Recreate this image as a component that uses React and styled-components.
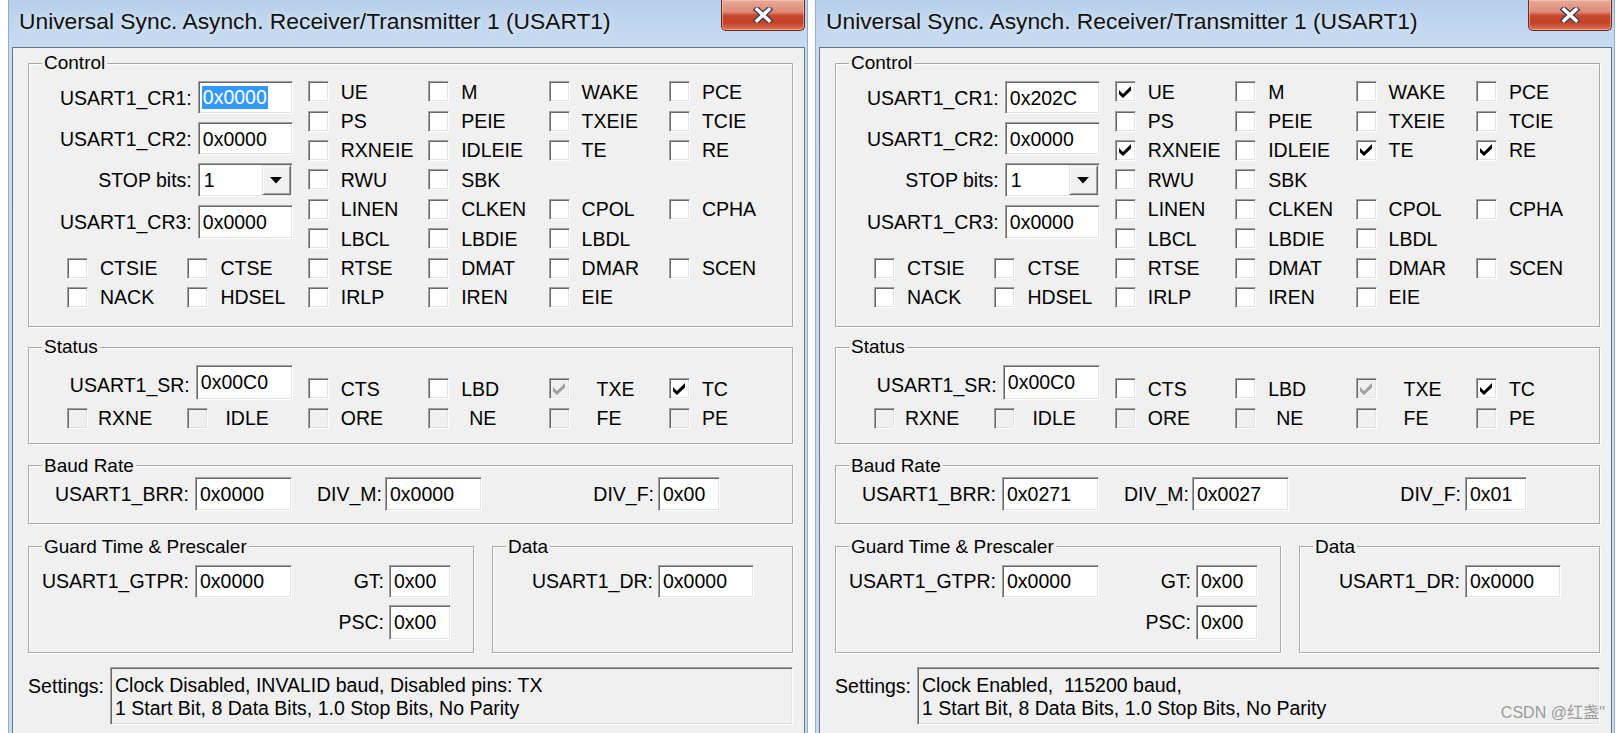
import React from 'react';
import styled, { createGlobalStyle } from 'styled-components';

const Global = createGlobalStyle`
  html, body { margin: 0; padding: 0; background: #ffffff; }
  body { font-family: "Liberation Sans", Arial, sans-serif; color: #000; }
`;

const Page = styled.div`
  position: relative;
  display: flex;
  gap: 7px;
  padding-left: 8px;
  height: 733px;
  overflow: hidden;
`;

const Window = styled.div`
  width: 800px;
  height: 733px;
  box-sizing: border-box;
  display: flex;
  flex-direction: column;
  position: relative;
  background: linear-gradient(180deg, #b6cfeb 0px, #c3d8ef 30px, #c8dcf1 60px, #c6daf0 100%);
  border-left: 1px solid #93acc8;
  border-right: 1px solid #93acc8;
  padding: 0 2px 0 3px;
`;

const TitleBar = styled.div`
  height: 47px;
  flex: none;
  display: flex;
  align-items: flex-start;
`;

const Title = styled.div`
  margin: 8px 0 0 7px;
  font-size: 22.8px;
  line-height: 26px;
  color: #111;
  white-space: nowrap;
  text-shadow: 0 0 6px rgba(255, 255, 255, 0.7);
`;

const CloseButton = styled.div`
  margin-left: auto;
  width: 84px;
  height: 31px;
  box-sizing: border-box;
  border: 1px solid #6f2a1c;
  border-top: none;
  border-radius: 0 0 5px 5px;
  background: linear-gradient(180deg, #e9a998 0%, #dc8a76 40%, #c8472e 52%, #c34227 75%, #dc7254 100%);
  box-shadow: inset 0 0 0 1px rgba(255, 220, 210, 0.45);
  display: flex;
  align-items: center;
  justify-content: center;
`;

const Client = styled.div`
  flex: 1;
  background: #f0f0f0;
  border: 1px solid #62778e;
  border-bottom: none;
  padding: 4px 11px 0 15px;
  display: flex;
  flex-direction: column;
  min-height: 0;
`;

const Group = styled.fieldset`
  margin: ${p => p.$mt || 0}px 0 0 0;
  padding: 0 0 ${p => p.$pb || 0}px 0;
  border: 1px solid #a9a9a9;
  box-shadow: inset 1px 1px 0 #ffffff, 1px 1px 0 #ffffff;
  min-width: 0;
  flex: ${p => (p.$grow ? 1 : 'none')};
  width: ${p => (p.$w ? `${p.$w}px` : 'auto')};
  box-sizing: border-box;
`;

const Legend = styled.legend`
  margin-left: 13px;
  padding: 0 2px;
  font-size: 19px;
  line-height: 22px;
  background: #f0f0f0;
`;

const BitGrid = styled.div`
  margin: ${p => p.$mt}px 0 0 38px;
  display: grid;
  grid-template-columns: repeat(6, 120.4px);
  grid-auto-rows: 29.4px;
`;

const EditBlock = styled.div`
  grid-column: 1 / 3;
  grid-row: 1 / 7;
  margin-left: -20px;
  padding: 4px 15px 0 0;
  display: grid;
  grid-template-columns: minmax(0, 1fr) 95px;
  grid-auto-rows: min-content;
  column-gap: 6px;
  row-gap: 8px;
  align-items: center;
  align-content: start;
`;

const StatusField = styled.div`
  grid-column: 1 / 3;
  grid-row: 1;
  align-self: end;
  margin: 0 0 4px -20px;
  padding-right: 15px;
  display: grid;
  grid-template-columns: minmax(0, 1fr) 97px;
  column-gap: 6px;
  align-items: center;
`;

const FieldLabel = styled.div`
  font-size: 19.5px;
  line-height: 22px;
  text-align: right;
  white-space: nowrap;
  padding-right: ${p => p.$pr || 0}px;
  padding-top: ${p => p.$pt || 0}px;
  grid-column: ${p => p.$c || 'auto'};
  grid-row: ${p => p.$r || 'auto'};
`;

const Edit = styled.div`
  box-sizing: border-box;
  width: ${p => p.$w}px;
  height: ${p => p.$h || 34}px;
  background: #fff;
  border: 1px solid;
  border-color: #a0a0a0 #ffffff #ffffff #a0a0a0;
  box-shadow: inset 1px 1px 0 #696969, inset -1px -1px 0 #e3e3e3;
  padding-left: 4px;
  display: flex;
  align-items: center;
  font-size: 19.5px;
  line-height: 22px;
  white-space: pre;
  grid-column: ${p => p.$c || 'auto'};
  grid-row: ${p => p.$r || 'auto'};
`;

const Selected = styled.span`
  background: #3399ff;
  color: #fff;
  line-height: 23px;
  padding: 0 1px;
  margin-left: -1px;
`;

const Combo = styled.div`
  box-sizing: border-box;
  width: 95px;
  height: 34px;
  background: #fff;
  border: 1px solid;
  border-color: #a0a0a0 #ffffff #ffffff #a0a0a0;
  box-shadow: inset 1px 1px 0 #696969, inset -1px -1px 0 #e3e3e3;
  padding: 1px;
  display: flex;
`;

const ComboText = styled.div`
  flex: 1;
  display: flex;
  align-items: center;
  padding-left: 4px;
  font-size: 19.5px;
`;

const ComboButton = styled.div`
  width: 29px;
  box-sizing: border-box;
  background: #f0f0f0;
  border: 1px solid;
  border-color: #e3e3e3 #696969 #696969 #e3e3e3;
  box-shadow: inset 1px 1px 0 #ffffff, inset -1px -1px 0 #a0a0a0;
  display: flex;
  align-items: center;
  justify-content: center;
`;

const CheckCell = styled.div`
  grid-column: ${p => p.$c};
  grid-row: ${p => p.$r};
  display: flex;
  align-items: center;
`;

const Box = styled.span`
  flex: none;
  width: 21px;
  height: 21px;
  box-sizing: border-box;
  background: ${p => (p.$disabled ? '#f0f0f0' : '#ffffff')};
  border: 1px solid;
  border-color: #a0a0a0 #ffffff #ffffff #a0a0a0;
  box-shadow: inset 1px 1px 0 #696969, inset -1px -1px 0 #e3e3e3;
  display: flex;
  align-items: center;
  justify-content: center;
`;

const CheckLabel = styled.span`
  margin-left: ${p => p.$gap}px;
  font-size: 19.5px;
  line-height: 22px;
  white-space: nowrap;
`;

const FieldGrid = styled.div`
  display: grid;
  grid-template-columns: ${p => p.$cols};
  grid-template-rows: ${p => p.$rows || 'auto'};
  row-gap: 7px;
  align-items: center;
  padding-top: ${p => p.$pt || 0}px;
`;

const BottomRow = styled.div`
  margin-top: 12px;
  display: flex;
  gap: 18px;
`;

const SettingsRow = styled.div`
  margin-top: 14px;
  display: grid;
  grid-template-columns: 82px 1fr;
  align-items: start;
`;

const SettingsBox = styled.div`
  box-sizing: border-box;
  height: 58px;
  background: #f0f0f0;
  border: 1px solid;
  border-color: #a0a0a0 #ffffff #ffffff #a0a0a0;
  box-shadow: inset 1px 1px 0 #696969, inset -1px -1px 0 #e3e3e3;
  padding: 6px 0 0 4px;
  font-size: 19.5px;
  line-height: 23px;
  white-space: pre;
`;

const Watermark = styled.div`
  position: absolute;
  right: 9px;
  top: 703px;
  font-family: "Liberation Sans", "Noto Sans CJK SC", sans-serif;
  font-size: 16px;
  line-height: 20px;
  color: #9a9a9a;
  white-space: nowrap;
`;

const CloseIcon = () => (
  <svg width="20" height="16" viewBox="0 0 20 16">
    <path d="M4 2.5 L16 13.5 M16 2.5 L4 13.5" stroke="#3a3f52" strokeWidth="6" strokeLinecap="square" fill="none" />
    <path d="M4 2.5 L16 13.5 M16 2.5 L4 13.5" stroke="#ffffff" strokeWidth="3.4" strokeLinecap="square" fill="none" />
  </svg>
);

const Tick = ({ gray }) => (
  <svg width="12" height="12" viewBox="0 0 7 7">
    <polygon points="0,2.4 2.3,4.6 7,0 7,2.6 2.3,7 0,4.8" fill={gray ? '#a0a0a0' : '#000'} />
  </svg>
);

const Arrow = () => (
  <svg width="12" height="7" viewBox="0 0 12 7">
    <polygon points="0,0 12,0 6,6.5" fill="#000" />
  </svg>
);

const Check = ({ label, c, r, checked, disabled, gap = 12 }) => (
  <CheckCell $c={c} $r={r}>
    <Box $disabled={disabled}>{checked && <Tick gray={disabled} />}</Box>
    <CheckLabel $gap={gap}>{label}</CheckLabel>
  </CheckCell>
);

const controlBits = [
  ['UE', 3, 1], ['M', 4, 1], ['WAKE', 5, 1], ['PCE', 6, 1],
  ['PS', 3, 2], ['PEIE', 4, 2], ['TXEIE', 5, 2], ['TCIE', 6, 2],
  ['RXNEIE', 3, 3], ['IDLEIE', 4, 3], ['TE', 5, 3], ['RE', 6, 3],
  ['RWU', 3, 4], ['SBK', 4, 4],
  ['LINEN', 3, 5], ['CLKEN', 4, 5], ['CPOL', 5, 5], ['CPHA', 6, 5],
  ['LBCL', 3, 6], ['LBDIE', 4, 6], ['LBDL', 5, 6],
  ['CTSIE', 1, 7], ['CTSE', 2, 7], ['RTSE', 3, 7], ['DMAT', 4, 7], ['DMAR', 5, 7], ['SCEN', 6, 7],
  ['NACK', 1, 8], ['HDSEL', 2, 8], ['IRLP', 3, 8], ['IREN', 4, 8], ['EIE', 5, 8],
];

const statusBits = [
  { l: 'CTS', c: 3, r: 1 },
  { l: 'LBD', c: 4, r: 1 },
  { l: 'TXE', c: 5, r: 1, dis: true, chk: true, gap: 27 },
  { l: 'TC', c: 6, r: 1, chk: true },
  { l: 'RXNE', c: 1, r: 2, dis: true, gap: 10 },
  { l: 'IDLE', c: 2, r: 2, dis: true, gap: 17 },
  { l: 'ORE', c: 3, r: 2, dis: true },
  { l: 'NE', c: 4, r: 2, dis: true, gap: 20 },
  { l: 'FE', c: 5, r: 2, dis: true, gap: 27 },
  { l: 'PE', c: 6, r: 2, dis: true },
];

const windows = [
  {
    cr1: '0x0000', cr1Selected: true, cr2: '0x0000', cr3: '0x0000', sr: '0x00C0',
    brr: '0x0000', divm: '0x0000', divf: '0x00', gtpr: '0x0000', gt: '0x00', psc: '0x00', dr: '0x0000',
    checked: [],
    settings: 'Clock Disabled, INVALID baud, Disabled pins: TX\n1 Start Bit, 8 Data Bits, 1.0 Stop Bits, No Parity',
  },
  {
    cr1: '0x202C', cr2: '0x0000', cr3: '0x0000', sr: '0x00C0',
    brr: '0x0271', divm: '0x0027', divf: '0x01', gtpr: '0x0000', gt: '0x00', psc: '0x00', dr: '0x0000',
    checked: ['UE', 'RXNEIE', 'TE', 'RE'],
    settings: 'Clock Enabled,  115200 baud,\n1 Start Bit, 8 Data Bits, 1.0 Stop Bits, No Parity',
    watermark: true,
  },
];

const UsartDialog = ({ d }) => (
  <Window>
    <TitleBar>
      <Title>Universal Sync. Asynch. Receiver/Transmitter 1 (USART1)</Title>
      <CloseButton><CloseIcon /></CloseButton>
    </TitleBar>
    <Client>
      <Group $pb={14}>
        <Legend>Control</Legend>
        <BitGrid $mt={3}>
          <EditBlock>
            <FieldLabel>USART1_CR1:</FieldLabel>
            <Edit $w={95} $h={33}>{d.cr1Selected ? <Selected>{d.cr1}</Selected> : d.cr1}</Edit>
            <FieldLabel>USART1_CR2:</FieldLabel>
            <Edit $w={95} $h={33}>{d.cr2}</Edit>
            <FieldLabel>STOP bits:</FieldLabel>
            <Combo>
              <ComboText>1</ComboText>
              <ComboButton><Arrow /></ComboButton>
            </Combo>
            <FieldLabel>USART1_CR3:</FieldLabel>
            <Edit $w={95} $h={34}>{d.cr3}</Edit>
          </EditBlock>
          {controlBits.map(([l, c, r]) => (
            <Check key={l} label={l} c={c} r={r} checked={d.checked.includes(l)} />
          ))}
        </BitGrid>
      </Group>

      <Group $mt={9} $pb={10}>
        <Legend>Status</Legend>
        <BitGrid $mt={16}>
          <StatusField>
            <FieldLabel $pt={6}>USART1_SR:</FieldLabel>
            <Edit $w={97} $h={35}>{d.sr}</Edit>
          </StatusField>
          {statusBits.map(b => (
            <Check key={b.l} label={b.l} c={b.c} r={b.r} checked={b.chk} disabled={b.dis} gap={b.gap} />
          ))}
        </BitGrid>
      </Group>

      <Group $mt={11} $pb={12}>
        <Legend>Baud Rate</Legend>
        <FieldGrid $cols="166px 97px 93px 97px 176px 62px">
          <FieldLabel $pr={6}>USART1_BRR:</FieldLabel>
          <Edit $w={97}>{d.brr}</Edit>
          <FieldLabel $pr={3}>DIV_M:</FieldLabel>
          <Edit $w={97}>{d.divm}</Edit>
          <FieldLabel $pr={4}>DIV_F:</FieldLabel>
          <Edit $w={62}>{d.divf}</Edit>
        </FieldGrid>
      </Group>

      <BottomRow>
        <Group $w={446} $pb={12}>
          <Legend>Guard Time &amp; Prescaler</Legend>
          <FieldGrid $cols="166px 97px 97px 62px" $rows="33px 35px" $pt={7}>
            <FieldLabel $pr={6} $c={1} $r={1}>USART1_GTPR:</FieldLabel>
            <Edit $w={97} $h={33} $c={2} $r={1}>{d.gtpr}</Edit>
            <FieldLabel $pr={5} $c={3} $r={1}>GT:</FieldLabel>
            <Edit $w={62} $h={33} $c={4} $r={1}>{d.gt}</Edit>
            <FieldLabel $pr={5} $c={3} $r={2}>PSC:</FieldLabel>
            <Edit $w={62} $h={35} $c={4} $r={2}>{d.psc}</Edit>
          </FieldGrid>
        </Group>
        <Group $grow $pb={12}>
          <Legend>Data</Legend>
          <FieldGrid $cols="165px 96px" $pt={7}>
            <FieldLabel $pr={5}>USART1_DR:</FieldLabel>
            <Edit $w={96} $h={33}>{d.dr}</Edit>
          </FieldGrid>
        </Group>
      </BottomRow>

      <SettingsRow>
        <FieldLabel $pr={6} $pt={8}>Settings:</FieldLabel>
        <SettingsBox>{d.settings}</SettingsBox>
      </SettingsRow>
    </Client>
    {d.watermark && <Watermark>CSDN @红盏''</Watermark>}
  </Window>
);

export default function App() {
  return (
    <>
      <Global />
      <Page>
        {windows.map((d, i) => (
          <UsartDialog key={i} d={d} />
        ))}
      </Page>
    </>
  );
}
